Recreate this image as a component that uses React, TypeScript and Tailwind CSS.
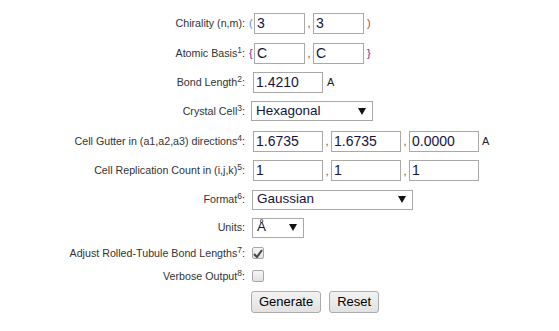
import type { ReactNode } from "react";

const font = "font-['Liberation_Sans',Arial,sans-serif]";

function Field({ value, width }: { value: string; width: string }) {
  return (
    <div
      className={`flex h-[21px] items-center border border-[#a9a9a9] bg-white pl-[2px] text-[14px] text-[#14143c] ${width}`}
    >
      {value}
    </div>
  );
}

function Dropdown({ value, width }: { value: string; width: string }) {
  return (
    <div
      className={`flex h-[20px] items-center justify-between border border-[#a9a9a9] bg-white pl-[4px] pr-[6px] text-[13.5px] text-[#14143c] ${width}`}
    >
      <span>{value}</span>
      <svg width="8" height="7" viewBox="0 0 8 7">
        <path d="M0 0h8L4 7z" fill="#111" />
      </svg>
    </div>
  );
}

function Check({ checked }: { checked?: boolean }) {
  return (
    <div className="flex h-[12px] w-[12px] items-center justify-center rounded-[2px] border border-[#a8a8a8] bg-gradient-to-b from-[#f6f6f6] to-[#e0e0e0]">
      {checked && (
        <svg width="10" height="9" viewBox="0 0 10 9">
          <path d="M1 5l3 3 5-7" stroke="#444" strokeWidth="2" fill="none" />
        </svg>
      )}
    </div>
  );
}

function Sep({ c = "," }: { c?: string }) {
  return <span className="w-[8px] self-end pb-[2px] text-center text-[11px] text-[#555]">{c}</span>;
}

function Row({
  label,
  note,
  h,
  children,
}: {
  label: string;
  note?: string;
  h: string;
  children: ReactNode;
}) {
  return (
    <div className={`flex items-center ${h}`}>
      <div className="w-[249px] pr-[4px] text-right text-[10.7px] text-[#333]">
        {label}
        {note && <sup className="text-[8.5px]">{note}</sup>}:
      </div>
      <div className="flex items-center">{children}</div>
    </div>
  );
}

export default function App() {
  return (
    <div className={`h-[331px] w-[559px] bg-white pt-[8px] ${font}`}>
      <Row label="Chirality (n,m)" h="h-[30px]">
        <span className="w-[5px] text-[11px] text-[#5b8fd0]">(</span>
        <Field value="3" width="w-[51px]" />
        <Sep />
        <Field value="3" width="w-[51px]" />
        <span className="ml-[3px] text-[11px] text-[#c0392b]">)</span>
      </Row>
      <Row label="Atomic Basis" note="1" h="h-[30px]">
        <span className="w-[5px] text-[11px] text-[#6a2a8a]">{"{"}</span>
        <Field value="C" width="w-[51px]" />
        <Sep />
        <Field value="C" width="w-[51px]" />
        <span className="ml-[3px] text-[11px] text-[#6a2a8a]">{"}"}</span>
      </Row>
      <Row label="Bond Length" note="2" h="h-[28px]">
        <div className="ml-[4px] flex items-center">
          <Field value="1.4210" width="w-[70px]" />
          <span className="ml-[4px] text-[11px] text-[#222]">A</span>
        </div>
      </Row>
      <Row label="Crystal Cell" note="3" h="h-[30px]">
        <div className="ml-[2px]">
          <Dropdown value="Hexagonal" width="w-[122px]" />
        </div>
      </Row>
      <Row label="Cell Gutter in (a1,a2,a3) directions" note="4" h="h-[30px]">
        <div className="ml-[4px] flex items-center">
          <Field value="1.6735" width="w-[70px]" />
          <Sep />
          <Field value="1.6735" width="w-[70px]" />
          <Sep />
          <Field value="0.0000" width="w-[70px]" />
          <span className="ml-[3px] text-[11px] text-[#222]">A</span>
        </div>
      </Row>
      <Row label="Cell Replication Count in (i,j,k)" note="5" h="h-[29px]">
        <div className="ml-[4px] flex items-center">
          <Field value="1" width="w-[70px]" />
          <Sep />
          <Field value="1" width="w-[70px]" />
          <Sep />
          <Field value="1" width="w-[70px]" />
        </div>
      </Row>
      <Row label="Format" note="6" h="h-[29px]">
        <div className="ml-[3px]">
          <Dropdown value="Gaussian" width="w-[161px]" />
        </div>
      </Row>
      <Row label="Units" h="h-[27px]">
        <div className="ml-[3px]">
          <Dropdown value="Å" width="w-[52px]" />
        </div>
      </Row>
      <Row label="Adjust Rolled-Tubule Bond Lengths" note="7" h="h-[24px]">
        <div className="ml-[3px]">
          <Check checked />
        </div>
      </Row>
      <Row label="Verbose Output" note="8" h="h-[22px]">
        <div className="ml-[3px]">
          <Check />
        </div>
      </Row>
      <div className="flex h-[29px] items-center pl-[251px]">
        <button className="h-[22px] rounded-[3px] border border-[#acacac] bg-gradient-to-b from-[#f2f2f2] to-[#e2e2e2] px-[7px] text-[13px] text-black">
          Generate
        </button>
        <button className="ml-[8px] h-[22px] rounded-[3px] border border-[#acacac] bg-gradient-to-b from-[#f2f2f2] to-[#e2e2e2] px-[7px] text-[13px] text-black">
          Reset
        </button>
      </div>
    </div>
  );
}
